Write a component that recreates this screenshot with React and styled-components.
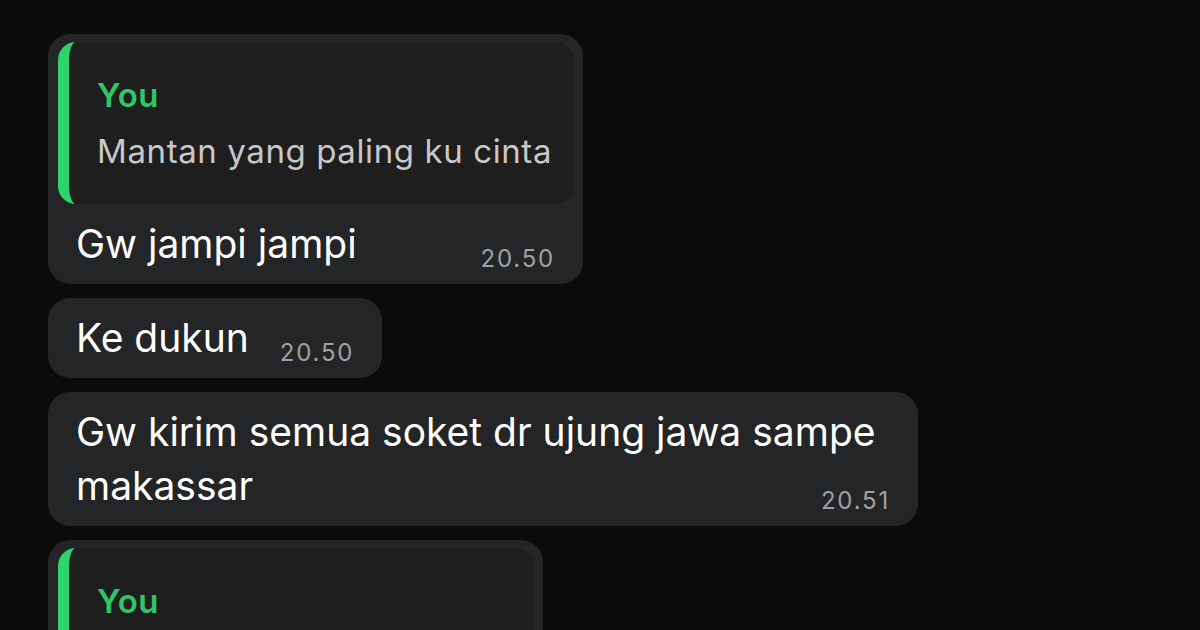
import React from "react";
import styled, { createGlobalStyle } from "styled-components";

const Global = createGlobalStyle`
  html, body { margin: 0; padding: 0; background: #0b0b0b; }
  body { width: 1200px; height: 630px; overflow: hidden; font-family: Inter, "Noto Sans", "Liberation Sans", sans-serif; -webkit-font-smoothing: antialiased; }
`;

const Chat = styled.div`
  display: flex;
  flex-direction: column;
  align-items: flex-start;
  gap: 14px;
  padding: 34px 0 0 48px;
  box-sizing: border-box;
  width: 1200px;
  height: 630px;
  overflow: hidden;
`;

const Bubble = styled.div`
  background: #242526;
  border-radius: 22px;
  max-width: 870px;
  box-sizing: border-box;
  display: flex;
  flex-direction: column;
  align-items: stretch;
`;

const Quote = styled.div`
  margin: 8px 9px 0 10px;
  background: #1e1e1e;
  border-left: 11px solid #2cd46b;
  border-radius: 18px;
  padding: 33px 22px 33px 28px;
  display: flex;
  flex-direction: column;
  gap: 16px;
`;

const QuoteName = styled.div`
  color: #2ec768;
  font-size: 33px;
  font-weight: 600;
  line-height: 40px;
  letter-spacing: 0.4px;
`;

const QuoteText = styled.div`
  color: #c8c8c8;
  font-size: 33px;
  line-height: 40px;
  letter-spacing: 0.6px;
  white-space: nowrap;
`;

const Body = styled.div`
  display: flow-root;
  padding: 13px 28px 13px 28px;
  color: #ffffff;
  font-size: 39px;
  line-height: 54px;
`;

const Time = styled.span`
  float: right;
  margin: 30px 0 0 ${(p) => p.$gap || 31}px;
  font-size: 24px;
  line-height: 24px;
  letter-spacing: 1.8px;
  color: #a0a0a0;
`;

const messages = [
  { quote: { name: "You", text: "Mantan yang paling ku cinta" }, text: "Gw jampi jampi", time: "20.50" },
  { text: "Ke dukun", time: "20.50" },
  { text: "Gw kirim semua soket dr ujung jawa sampe makassar", time: "20.51" },
  { quote: { name: "You", text: "Kalo gw jadi dia gw kabur" }, text: "Pantes aja", time: "20.51" },
];

export default function App() {
  return (
    <>
      <Global />
      <Chat>
        {messages.map((m, i) => (
          <Bubble key={i}>
            {m.quote && (
              <Quote>
                <QuoteName>{m.quote.name}</QuoteName>
                <QuoteText>{m.quote.text}</QuoteText>
              </Quote>
            )}
            <Body>
              {m.text}
              <Time>{m.time}</Time>
            </Body>
          </Bubble>
        ))}
      </Chat>
    </>
  );
}
